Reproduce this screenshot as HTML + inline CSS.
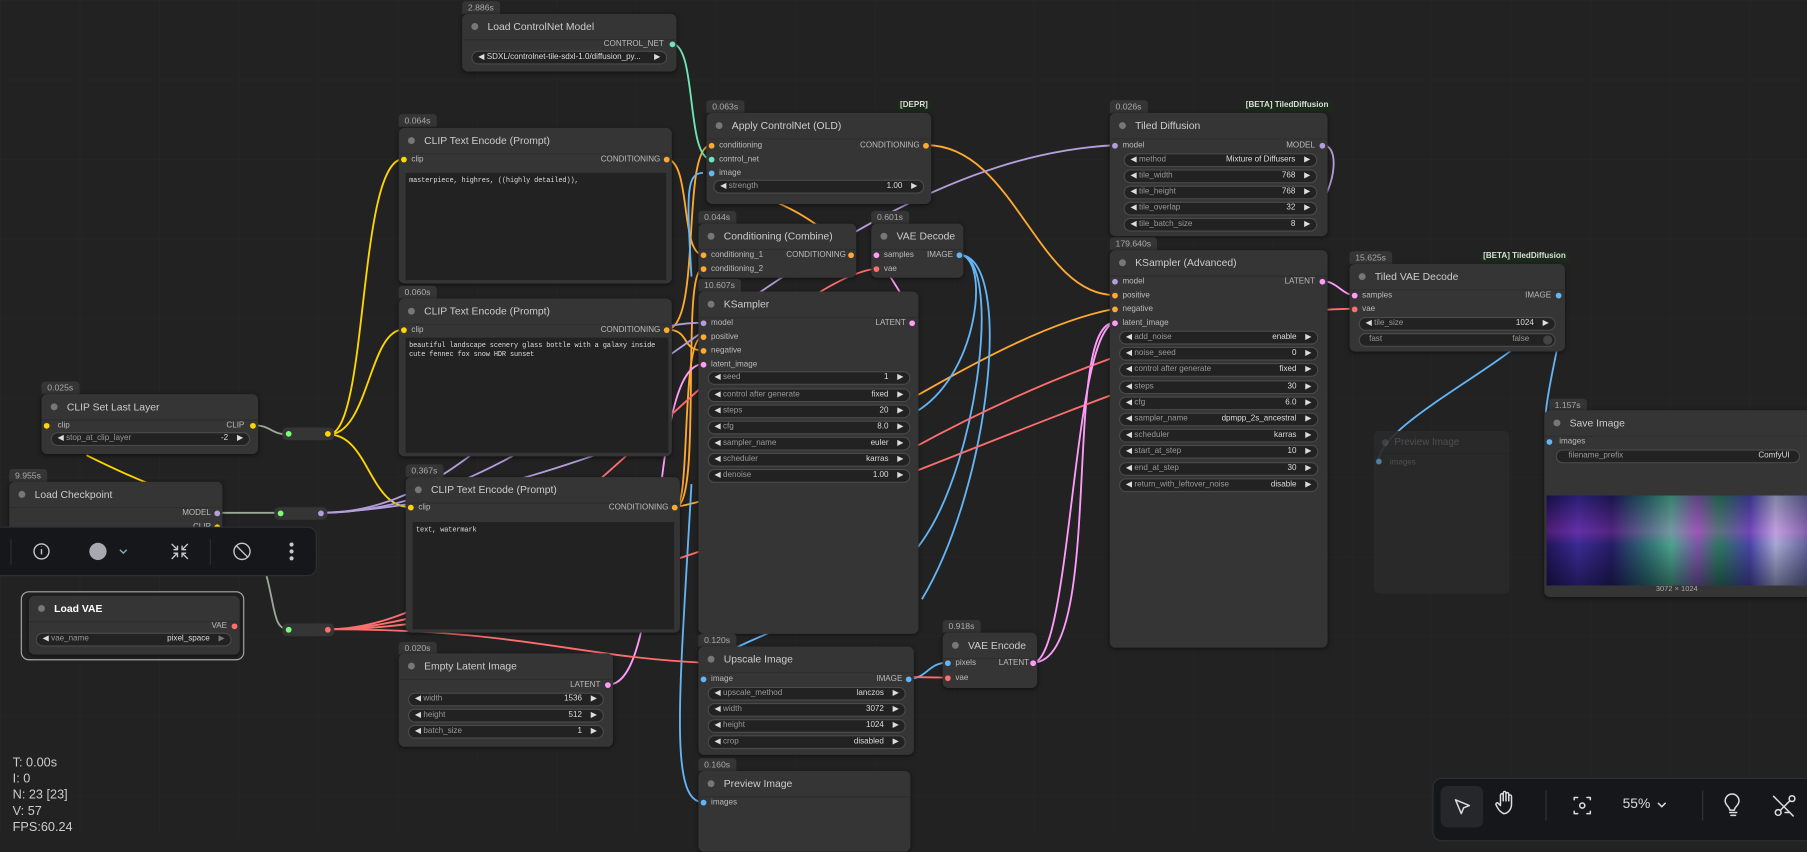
<!DOCTYPE html>
<html><head><meta charset="utf-8"><style>
html,body{margin:0;padding:0;width:1807px;height:835px;overflow:hidden;background:#222}
#f{position:absolute;left:0;top:0;width:1568px;height:725px;transform:scale(1.15242);transform-origin:0 0;font-family:"Liberation Sans",sans-serif;
background-color:#222;background-image:linear-gradient(#252525 1px,transparent 1px),linear-gradient(90deg,#252525 1px,transparent 1px);background-size:69px 69px}
.n{position:absolute;background:#353535;border-radius:5px;box-shadow:0 1px 4px rgba(0,0,0,.5)}
.n .t{height:22px;line-height:22px;font-size:9px;color:#ccc;padding-left:22px;border-bottom:1px solid #2e2e2e;position:relative;white-space:nowrap}
.n .t:before{content:"";position:absolute;left:8px;top:8px;width:6px;height:6px;border-radius:50%;background:#777}
.tag{position:absolute;background:#353535;color:#aaa;font-size:7.5px;padding:0 5px;height:11px;line-height:11px;border-radius:3px 3px 0 0}
.bd{position:absolute;background:#1b2a1b;color:#ddd;font-size:7px;font-weight:bold;padding:0 3px;height:10px;line-height:10px;border-radius:2px}
.d{position:absolute;width:5px;height:5px;border-radius:50%}
.l{position:absolute;font-size:7px;color:#bbb;line-height:10px;white-space:nowrap;margin-top:1px}
.r{position:absolute;font-size:7px;color:#bbb;line-height:10px;white-space:nowrap;text-align:right;margin-top:1px}
.w{position:absolute;height:10px;border:1px solid #4a4a4a;border-radius:6px;background:#222;font-size:7px;color:#999;line-height:10px;white-space:nowrap;overflow:hidden}
.w i{font-style:normal;color:#ddd;padding:0 2px 0 5px}
.w b{position:absolute;right:18px;top:0;font-weight:normal;color:#ddd}
.w u{position:absolute;right:5px;top:0;text-decoration:none;color:#ddd}
.ta{position:absolute;background:#222;color:#ddd;font-family:"Liberation Mono",monospace;font-size:6px;letter-spacing:-0.1px;line-height:8px;padding:3px;box-sizing:border-box}
.rr{position:absolute;background:#353535;border-radius:4px;height:11px}
.y{background:#ffd500}.o{background:#ffa931}.p{background:#b39ddb}.k{background:#ff9cf9}.b{background:#64b5f6}.v{background:#ff6e6e}.g{background:#6ee7b7}.gr{background:#7f7}
.st{position:absolute;left:11px;color:#ccc;font-size:11px;line-height:14px}
</style></head><body><div id="f">

<svg width="1568" height="725" style="position:absolute;left:0;top:0" fill="none" stroke-width="1.6">
<g stroke="#ffd500">
<path d="M285 377 C320 377,310 138,350 138"/><path d="M285 377 C320 377,320 286,350 286"/><path d="M285 377 C320 377,320 440,356 440"/><path d="M75 395 C95 405,110 412,130 420"/>
</g>
<g stroke="#9aa89a"><path d="M220 369 C235 369,235 377,250 377"/><path d="M189 445 L243 445"/><path d="M225 480 C240 520,235 546,250 546"/></g>
<g stroke="#ffa931">
<path d="M578 138 C600 138,590 221,610 221"/><path d="M578 286 C610 286,590 126,617 126"/><path d="M804 126 C880 126,900 256,967 256"/><path d="M738 221 C700 180,660 170,630 160"/>
<path d="M586 440 C610 440,590 233,610 233"/><path d="M586 440 C600 440,590 292,610 292"/><path d="M586 440 C700 420,850 290,967 268"/><path d="M578 286 C600 286,590 304,610 304"/>
</g>
<g stroke="#b39ddb"><path d="M279 445 C420 445,480 280,610 280"/><path d="M279 445 C500 445,700 140,967 126"/><path d="M279 445 C400 440,500 400,560 380"/><path d="M1148 126 C1160 126,1160 150,1150 170"/></g>
<g stroke="#ff9cf9"><path d="M528 594 C580 594,560 316,610 316"/><path d="M792 280 C800 280,760 221,760 221"/><path d="M896 575 C960 575,920 280,967 280"/><path d="M1148 244 C1160 244,1165 256,1175 256"/></g>
<g stroke="#64b5f6"><path d="M832 221 C870 221,850 400,800 470 C760 530,600 560,610 589"/><path d="M832 221 C880 221,860 420,800 520"/><path d="M832 221 C860 221,850 330,790 360"/><path d="M788 589 C805 589,805 575,822 575"/><path d="M610 696 C580 696,590 600,600 420"/><path d="M610 150 C595 150,596 170,600 240"/>
<path d="M1352 256 C1370 256,1330 360,1344 383"/><path d="M1352 256 C1350 300,1200 360,1196 400"/></g>
<g stroke="#ff6e6e"><path d="M285 546 C450 546,650 250,760 233"/><path d="M285 546 C450 546,500 570,610 575 C700 580,760 588,822 588"/><path d="M285 546 C500 546,800 400,1000 330"/><path d="M790 390 C900 330,1050 268,1175 268"/><path d="M285 546 C380 546,500 480,590 460"/></g>
<path stroke="#6ee7b7" d="M583 38 C605 38,595 138,617 138"/>
<path stroke="#ff9cf9" d="M896 575 C930 575,930 290,967 280"/>
</svg>

<div class="tag" style="left:401px;top:1px">2.886s</div>
<div class="n" style="left:401px;top:12px;width:186px;height:50px"><div class="t">Load ControlNet Model</div></div>
<div class="r" style="right:992px;top:33px">CONTROL_NET</div><div class="d g" style="left:581px;top:36px"></div>
<div class="w" style="left:409px;top:44px;width:168px"><i>◀</i><span style="color:#ddd">SDXL/controlnet-tile-sdxl-1.0/diffusion_py...</span><u>▶</u></div>

<div class="tag" style="left:346px;top:99px">0.064s</div>
<div class="n" style="left:346px;top:111px;width:237px;height:135px"><div class="t">CLIP Text Encode (Prompt)</div></div>
<div class="d y" style="left:348px;top:136px"></div><div class="l" style="left:357px;top:133px">clip</div>
<div class="r" style="right:995px;top:133px">CONDITIONING</div><div class="d o" style="left:576px;top:136px"></div>
<div class="ta" style="left:352px;top:150px;width:226px;height:93px">masterpiece, highres, ((highly detailed)),</div>

<div class="tag" style="left:613px;top:87px">0.063s</div><div class="bd" style="left:778px;top:87px">[DEPR]</div>
<div class="n" style="left:613px;top:98px;width:195px;height:79px"><div class="t">Apply ControlNet (OLD)</div></div>
<div class="d o" style="left:615px;top:124px"></div><div class="l" style="left:624px;top:121px">conditioning</div>
<div class="d g" style="left:615px;top:136px"></div><div class="l" style="left:624px;top:133px">control_net</div>
<div class="d b" style="left:615px;top:148px"></div><div class="l" style="left:624px;top:145px">image</div>
<div class="r" style="right:770px;top:121px">CONDITIONING</div><div class="d o" style="left:801px;top:124px"></div>
<div class="w" style="left:619px;top:156px;width:181px"><i>◀</i>strength<b>1.00</b><u>▶</u></div>

<div class="tag" style="left:606px;top:183px">0.044s</div>
<div class="n" style="left:606px;top:194px;width:137px;height:47px"><div class="t">Conditioning (Combine)</div></div>
<div class="d o" style="left:608px;top:219px"></div><div class="l" style="left:617px;top:216px">conditioning_1</div>
<div class="d o" style="left:608px;top:231px"></div><div class="l" style="left:617px;top:228px">conditioning_2</div>
<div class="r" style="right:834px;top:216px">CONDITIONING</div><div class="d o" style="left:736px;top:219px"></div>

<div class="tag" style="left:756px;top:183px">0.601s</div>
<div class="n" style="left:756px;top:194px;width:80px;height:47px"><div class="t">VAE Decode</div></div>
<div class="d k" style="left:758px;top:219px"></div><div class="l" style="left:767px;top:216px">samples</div>
<div class="d v" style="left:758px;top:231px"></div><div class="l" style="left:767px;top:228px">vae</div>
<div class="r" style="right:741px;top:216px">IMAGE</div><div class="d b" style="left:830px;top:219px"></div>

<div class="tag" style="left:346px;top:248px">0.060s</div>
<div class="n" style="left:346px;top:259px;width:237px;height:137px"><div class="t">CLIP Text Encode (Prompt)</div></div>
<div class="d y" style="left:348px;top:284px"></div><div class="l" style="left:357px;top:281px">clip</div>
<div class="r" style="right:995px;top:281px">CONDITIONING</div><div class="d o" style="left:576px;top:284px"></div>
<div class="ta" style="left:352px;top:293px;width:228px;height:100px">beautiful landscape scenery glass bottle with a galaxy inside cute fennec fox snow HDR sunset</div>

<div class="tag" style="left:606px;top:242px">10.607s</div>
<div class="n" style="left:606px;top:253px;width:191px;height:297px"><div class="t">KSampler</div></div>
<div class="d p" style="left:608px;top:278px"></div><div class="l" style="left:617px;top:275px">model</div>
<div class="d o" style="left:608px;top:290px"></div><div class="l" style="left:617px;top:287px">positive</div>
<div class="d o" style="left:608px;top:302px"></div><div class="l" style="left:617px;top:299px">negative</div>
<div class="d k" style="left:608px;top:314px"></div><div class="l" style="left:617px;top:311px">latent_image</div>
<div class="r" style="right:782px;top:275px">LATENT</div><div class="d k" style="left:789px;top:278px"></div>
<div class="w" style="left:614px;top:322px;width:174px"><i>◀</i>seed<b>1</b><u>▶</u></div>
<div class="w" style="left:614px;top:337px;width:174px"><i>◀</i>control after generate<b>fixed</b><u>▶</u></div>
<div class="w" style="left:614px;top:351px;width:174px"><i>◀</i>steps<b>20</b><u>▶</u></div>
<div class="w" style="left:614px;top:365px;width:174px"><i>◀</i>cfg<b>8.0</b><u>▶</u></div>
<div class="w" style="left:614px;top:379px;width:174px"><i>◀</i>sampler_name<b>euler</b><u>▶</u></div>
<div class="w" style="left:614px;top:393px;width:174px"><i>◀</i>scheduler<b>karras</b><u>▶</u></div>
<div class="w" style="left:614px;top:407px;width:174px"><i>◀</i>denoise<b>1.00</b><u>▶</u></div>

<div class="tag" style="left:36px;top:331px">0.025s</div>
<div class="n" style="left:36px;top:342px;width:188px;height:52px"><div class="t">CLIP Set Last Layer</div></div>
<div class="d y" style="left:38px;top:367px"></div><div class="l" style="left:50px;top:364px">clip</div>
<div class="r" style="right:1356px;top:364px">CLIP</div><div class="d y" style="left:217px;top:367px"></div>
<div class="w" style="left:44px;top:375px;width:171px"><i>◀</i>stop_at_clip_layer<b>-2</b><u>▶</u></div>

<div class="tag" style="left:8px;top:407px">9.955s</div>
<div class="n" style="left:8px;top:418px;width:185px;height:60px"><div class="t">Load Checkpoint</div></div>
<div class="r" style="right:1385px;top:440px">MODEL</div><div class="d p" style="left:186px;top:443px"></div>
<div class="r" style="right:1385px;top:452px">CLIP</div><div class="d y" style="left:186px;top:455px"></div>

<div class="rr" style="left:245px;top:371px;width:45px"></div><div class="d gr" style="left:248px;top:374px"></div><div class="d y" style="left:282px;top:374px"></div>
<div class="rr" style="left:238px;top:440px;width:46px"></div><div class="d gr" style="left:241px;top:443px"></div><div class="d p" style="left:276px;top:443px"></div>
<div class="rr" style="left:245px;top:541px;width:45px"></div><div class="d gr" style="left:248px;top:544px"></div><div class="d v" style="left:282px;top:544px"></div>

<div style="position:absolute;left:-10px;top:457px;width:285px;height:43px;background:#16171b;border:1px solid #2e2f33;border-radius:8px;box-sizing:border-box"></div>
<div style="position:absolute;left:9px;top:468px;width:1px;height:22px;background:#2e2f33"></div>
<div style="position:absolute;left:182px;top:468px;width:1px;height:22px;background:#2e2f33"></div>
<svg style="position:absolute;left:0;top:457px" width="275" height="43" fill="none" stroke="#c8c8c8" stroke-width="1.2">
<circle cx="36" cy="21.5" r="6.5"/><path d="M36 19.5v4.5M36 17.3v.4"/>
<circle cx="85" cy="21.5" r="7.5" fill="#a8a8b0" stroke="none"/><path d="M104 20l3 3 3-3" stroke="#8ab"/>
<path d="M149 15l5 5M154 16.5v3.5h-3.5M163 15l-5 5M158 16.5v3.5h3.5M149 28l5-5M154 26.5v-3.5h-3.5M163 28l-5-5M158 26.5v-3.5h3.5"/>
<circle cx="210" cy="21.5" r="7"/><path d="M205 16.5l10 10"/>
<circle cx="253" cy="15.5" r="1.2" fill="#c8c8c8"/><circle cx="253" cy="21.5" r="1.2" fill="#c8c8c8"/><circle cx="253" cy="27.5" r="1.2" fill="#c8c8c8"/>
</svg>

<div style="position:absolute;left:18px;top:513px;width:194px;height:60px;border:1px solid #aaa;border-radius:7px;box-sizing:border-box"></div>
<div class="n" style="left:25px;top:517px;width:183px;height:51px"><div class="t" style="color:#fff;font-weight:bold">Load VAE</div></div>
<div class="r" style="right:1371px;top:538px">VAE</div><div class="d v" style="left:201px;top:541px"></div>
<div class="w" style="left:31px;top:549px;width:168px"><i>◀</i>vae_name<b>pixel_space</b><u style="color:#777">▶</u></div>

<div class="tag" style="left:352px;top:403px">0.367s</div>
<div class="n" style="left:352px;top:414px;width:238px;height:135px"><div class="t">CLIP Text Encode (Prompt)</div></div>
<div class="d y" style="left:354px;top:438px"></div><div class="l" style="left:363px;top:435px">clip</div>
<div class="r" style="right:988px;top:435px">CONDITIONING</div><div class="d o" style="left:583px;top:438px"></div>
<div class="ta" style="left:358px;top:453px;width:227px;height:93px">text, watermark</div>

<div class="tag" style="left:346px;top:557px">0.020s</div>
<div class="n" style="left:346px;top:567px;width:186px;height:81px"><div class="t">Empty Latent Image</div></div>
<div class="r" style="right:1047px;top:589px">LATENT</div><div class="d k" style="left:525px;top:592px"></div>
<div class="w" style="left:354px;top:601px;width:168px"><i>◀</i>width<b>1536</b><u>▶</u></div>
<div class="w" style="left:354px;top:615px;width:168px"><i>◀</i>height<b>512</b><u>▶</u></div>
<div class="w" style="left:354px;top:629px;width:168px"><i>◀</i>batch_size<b>1</b><u>▶</u></div>

<div class="tag" style="left:606px;top:550px">0.120s</div>
<div class="n" style="left:606px;top:561px;width:187px;height:94px"><div class="t">Upscale Image</div></div>
<div class="d b" style="left:608px;top:587px"></div><div class="l" style="left:617px;top:584px">image</div>
<div class="r" style="right:785px;top:584px">IMAGE</div><div class="d b" style="left:786px;top:587px"></div>
<div class="w" style="left:614px;top:596px;width:170px"><i>◀</i>upscale_method<b>lanczos</b><u>▶</u></div>
<div class="w" style="left:614px;top:610px;width:170px"><i>◀</i>width<b>3072</b><u>▶</u></div>
<div class="w" style="left:614px;top:624px;width:170px"><i>◀</i>height<b>1024</b><u>▶</u></div>
<div class="w" style="left:614px;top:638px;width:170px"><i>◀</i>crop<b>disabled</b><u>▶</u></div>

<div class="tag" style="left:818px;top:538px">0.918s</div>
<div class="n" style="left:818px;top:549px;width:82px;height:48px"><div class="t">VAE Encode</div></div>
<div class="d b" style="left:820px;top:573px"></div><div class="l" style="left:829px;top:570px">pixels</div>
<div class="d v" style="left:820px;top:586px"></div><div class="l" style="left:829px;top:583px">vae</div>
<div class="r" style="right:675px;top:570px">LATENT</div><div class="d k" style="left:894px;top:573px"></div>

<div class="tag" style="left:606px;top:658px">0.160s</div>
<div class="n" style="left:606px;top:669px;width:184px;height:70px"><div class="t">Preview Image</div></div>
<div class="d b" style="left:608px;top:694px"></div><div class="l" style="left:617px;top:691px">images</div>

<div class="tag" style="left:963px;top:87px">0.026s</div><div class="bd" style="left:1078px;top:87px">[BETA] TiledDiffusion</div>
<div class="n" style="left:963px;top:98px;width:189px;height:107px"><div class="t">Tiled Diffusion</div></div>
<div class="d p" style="left:965px;top:124px"></div><div class="l" style="left:974px;top:121px">model</div>
<div class="r" style="right:427px;top:121px">MODEL</div><div class="d p" style="left:1145px;top:124px"></div>
<div class="w" style="left:975px;top:133px;width:166px"><i>◀</i>method<b>Mixture of Diffusers</b><u>▶</u></div>
<div class="w" style="left:975px;top:147px;width:166px"><i>◀</i>tile_width<b>768</b><u>▶</u></div>
<div class="w" style="left:975px;top:161px;width:166px"><i>◀</i>tile_height<b>768</b><u>▶</u></div>
<div class="w" style="left:975px;top:175px;width:166px"><i>◀</i>tile_overlap<b>32</b><u>▶</u></div>
<div class="w" style="left:975px;top:189px;width:166px"><i>◀</i>tile_batch_size<b>8</b><u>▶</u></div>

<div class="tag" style="left:963px;top:206px">179.640s</div>
<div class="n" style="left:963px;top:217px;width:189px;height:345px"><div class="t">KSampler (Advanced)</div></div>
<div class="d p" style="left:965px;top:242px"></div><div class="l" style="left:974px;top:239px">model</div>
<div class="d o" style="left:965px;top:254px"></div><div class="l" style="left:974px;top:251px">positive</div>
<div class="d o" style="left:965px;top:266px"></div><div class="l" style="left:974px;top:263px">negative</div>
<div class="d k" style="left:965px;top:278px"></div><div class="l" style="left:974px;top:275px">latent_image</div>
<div class="r" style="right:427px;top:239px">LATENT</div><div class="d k" style="left:1145px;top:242px"></div>
<div class="w" style="left:971px;top:287px;width:171px"><i>◀</i>add_noise<b>enable</b><u>▶</u></div>
<div class="w" style="left:971px;top:301px;width:171px"><i>◀</i>noise_seed<b>0</b><u>▶</u></div>
<div class="w" style="left:971px;top:315px;width:171px"><i>◀</i>control after generate<b>fixed</b><u>▶</u></div>
<div class="w" style="left:971px;top:330px;width:171px"><i>◀</i>steps<b>30</b><u>▶</u></div>
<div class="w" style="left:971px;top:344px;width:171px"><i>◀</i>cfg<b>6.0</b><u>▶</u></div>
<div class="w" style="left:971px;top:358px;width:171px"><i>◀</i>sampler_name<b>dpmpp_2s_ancestral</b><u>▶</u></div>
<div class="w" style="left:971px;top:372px;width:171px"><i>◀</i>scheduler<b>karras</b><u>▶</u></div>
<div class="w" style="left:971px;top:386px;width:171px"><i>◀</i>start_at_step<b>10</b><u>▶</u></div>
<div class="w" style="left:971px;top:401px;width:171px"><i>◀</i>end_at_step<b>30</b><u>▶</u></div>
<div class="w" style="left:971px;top:415px;width:171px"><i>◀</i>return_with_leftover_noise<b>disable</b><u>▶</u></div>

<div class="tag" style="left:1171px;top:218px">15.625s</div><div class="bd" style="left:1284px;top:218px">[BETA] TiledDiffusion</div>
<div class="n" style="left:1171px;top:229px;width:187px;height:76px"><div class="t">Tiled VAE Decode</div></div>
<div class="d k" style="left:1173px;top:254px"></div><div class="l" style="left:1182px;top:251px">samples</div>
<div class="d v" style="left:1173px;top:266px"></div><div class="l" style="left:1182px;top:263px">vae</div>
<div class="r" style="right:222px;top:251px">IMAGE</div><div class="d b" style="left:1350px;top:254px"></div>
<div class="w" style="left:1179px;top:275px;width:169px"><i>◀</i>tile_size<b>1024</b><u>▶</u></div>
<div class="w" style="left:1179px;top:289px;width:169px"><i style="padding-left:8px;color:#999">fast</i><b style="right:22px;color:#999">false</b><span style="position:absolute;right:2px;top:1px;width:8px;height:8px;border-radius:50%;background:#444"></span></div>

<div style="position:absolute;left:1192px;top:374px;width:118px;height:141px;background:#2a2a2a;border-radius:5px;opacity:.9">
<div style="height:19px;line-height:19px;font-size:8.5px;color:#555;padding-left:18px;border-bottom:1px solid #262626">Preview Image</div>
<div style="position:absolute;left:7px;top:7px;width:6px;height:6px;border-radius:50%;background:#444"></div>
<div style="font-size:7px;color:#555;padding:4px 0 0 14px">images</div></div>
<div class="d b" style="left:1194px;top:398px;opacity:.6"></div>

<div class="tag" style="left:1344px;top:346px">1.157s</div>
<div class="n" style="left:1340px;top:356px;width:240px;height:162px"><div class="t">Save Image</div></div>
<div class="d b" style="left:1342px;top:381px"></div><div class="l" style="left:1353px;top:378px">images</div>
<div class="w" style="left:1350px;top:390px;width:210px"><i style="padding-left:10px;color:#999">filename_prefix</i><b style="right:8px">ComfyUI</b></div>
<div style="position:absolute;left:1342px;top:430px;width:226px;height:78px;background:linear-gradient(90deg,#1a1050 0%,#3a2a9a 12%,#201a60 25%,#2a7a70 38%,#50c090 48%,#8a60b0 58%,#2a8a5a 66%,#4a4ab0 78%,#c0c8e8 88%,#6a70a0 100%)">
<div style="position:absolute;inset:0;background:linear-gradient(180deg,rgba(10,10,40,.35) 0%,rgba(200,60,200,.3) 40%,rgba(60,40,120,.2) 55%,rgba(10,10,30,.55) 100%)"></div></div>
<div style="position:absolute;left:1342px;top:508px;width:226px;text-align:center;font-size:6.5px;color:#aaa">3072 × 1024</div>

<div class="st" style="top:655px">T: 0.00s</div>
<div class="st" style="top:669px">I: 0</div>
<div class="st" style="top:683px">N: 23 [23]</div>
<div class="st" style="top:697px">V: 57</div>
<div class="st" style="top:711px">FPS:60.24</div>

<div style="position:absolute;left:1243px;top:675px;width:340px;height:55px;background:#16171b;border:1px solid #2e2f33;border-radius:8px;box-sizing:border-box"></div>
<div style="position:absolute;left:1250px;top:682px;width:37px;height:36px;background:#26272b;border-radius:6px"></div>
<div style="position:absolute;left:1341px;top:686px;width:1px;height:26px;background:#333"></div>
<div style="position:absolute;left:1477px;top:686px;width:1px;height:26px;background:#333"></div>
<div style="position:absolute;left:1408px;top:690px;font-size:12px;color:#ddd">55%</div>
<svg style="position:absolute;left:1243px;top:675px" width="325" height="50" fill="none" stroke="#ddd" stroke-width="1.3" stroke-linejoin="round" stroke-linecap="round">
<path d="M20 19l12 5-5 2-2 5z"/>
<path d="M62 31c-3-1-5-4-6-6l-1-2c0-1 1-2 2-1l2 2v-9a1.2 1.2 0 012.4 0v5-7a1.2 1.2 0 012.4 0v7-6a1.2 1.2 0 012.4 0v6-4a1.2 1.2 0 012.4 0v7c0 4-3 8-7 8z"/>
<path d="M123 19v-2h3M134 17h3v2M137 29v2h-3M126 31h-3v-2"/><circle cx="130" cy="24" r="2.2"/>
<path d="M196 22l3 3 3-3"/>
<path d="M258 30h6M259 32.5h4M258 28c0-3-4-4-4-8a6 6 0 0112 0c0 4-4 5-4 8z"/>
<circle cx="300" cy="30" r="2.5"/><circle cx="312" cy="18" r="2.5"/><path d="M302 28l8-8M298 18l4 4M306 30h4M296 16l17 17"/>
</svg>
</div></body></html>
